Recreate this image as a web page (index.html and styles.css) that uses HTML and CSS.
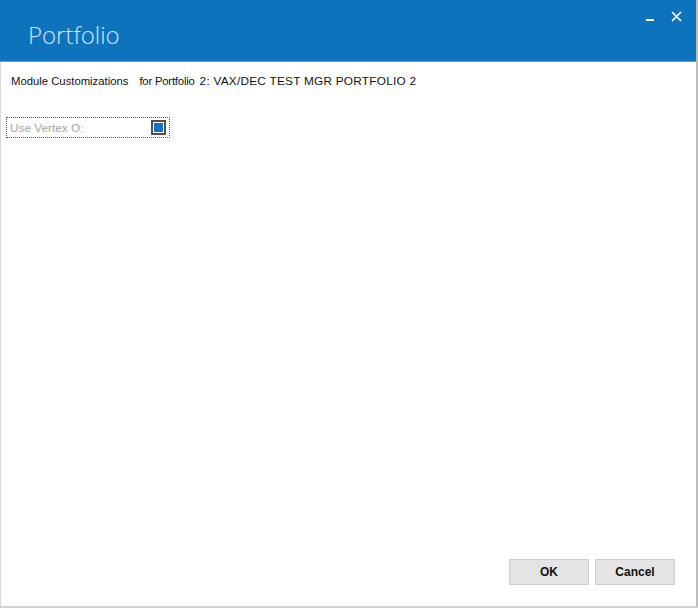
FILE: index.html
```html
<!DOCTYPE html>
<html>
<head>
<meta charset="utf-8">
<link rel="stylesheet" href="styles.css">
</head>
<body>
<div class="window">
  <div class="titlebar">
    <div class="title">Portfolio</div>
    <div class="controls">
      <span class="min"></span>
      <svg class="close" width="11" height="11" viewBox="0 0 11 11"><path d="M1 1 L10 10 M10 1 L1 10" stroke="#ffffff" stroke-width="1.6"/></svg>
    </div>
  </div>
  <div class="content">
    <div class="heading"><span class="lbl">Module Customizations</span><span class="lbl for">for Portfolio</span><span class="name">2: VAX/DEC TEST MGR PORTFOLIO 2</span></div>
    <div class="field">
      <span class="label">Use Vertex O:</span>
      <span class="check"><span class="fill"></span></span>
    </div>
    <div class="spacer"></div>
    <div class="buttons">
      <button class="btn">OK</button>
      <button class="btn">Cancel</button>
    </div>
  </div>
</div>
</body>
</html>
```
FILE: styles.css
```css
html, body {
  margin: 0;
  padding: 0;
  background: #ffffff;
}
.window {
  width: 696px;
  height: 606px;
  border-right: 2px solid #bdbdbd;
  border-bottom: 2px solid #d4d4d4;
  display: flex;
  flex-direction: column;
  font-family: "Liberation Sans", Arial, sans-serif;
}
.titlebar {
  height: 61px;
  background: #0f72bd;
  border-bottom: 1px solid #5d9fd6;
  display: flex;
  justify-content: space-between;
  align-items: flex-start;
  flex-shrink: 0;
}
.title {
  font-family: "Open Sans", sans-serif;
  font-weight: 300;
  font-size: 24px;
  color: #d2e5f6;
  margin-left: 28px;
  margin-top: 19px;
  line-height: 32px;
}
.controls {
  display: flex;
  align-items: flex-start;
  margin-top: 11px;
  margin-right: 14px;
  gap: 17px;
}
.min {
  width: 8px;
  height: 2px;
  background: #ffffff;
  margin-top: 8px;
}
.close {
  display: block;
}
.content {
  flex: 1;
  border-left: 1px solid #d8d8d8;
  display: flex;
  flex-direction: column;
}
.heading {
  display: flex;
  align-items: baseline;
  color: #111111;
  margin-top: 12px;
  margin-left: 10px;
  line-height: 14px;
  white-space: nowrap;
  font-size: 11.3px;
}
.for {
  margin-left: 11px;
  letter-spacing: -0.2px;
}
.name {
  margin-left: 5px;
  font-size: 11.8px;
  letter-spacing: 0.25px;
}
.field {
  margin-top: 29px;
  margin-left: 5px;
  width: 162px;
  height: 19px;
  border: 1px dotted #555555;
  display: flex;
  align-items: center;
  justify-content: space-between;
  box-sizing: content-box;
}
.label {
  font-size: 11.8px;
  color: #a6a6a6;
  margin-left: 3px;
}
.check {
  width: 9px;
  height: 9px;
  border: 2px solid #4f4f4f;
  background: #ffffff;
  padding: 1px;
  margin-right: 3px;
  display: flex;
}
.fill {
  flex: 1;
  background: #0f72c4;
}
.spacer {
  flex: 1;
}
.buttons {
  display: flex;
  justify-content: flex-end;
  gap: 6px;
  margin-right: 21px;
  margin-bottom: 21px;
}
.btn {
  width: 80px;
  height: 26px;
  background: #e4e4e4;
  border: 1px solid #cfcfcf;
  font-family: "Liberation Sans", Arial, sans-serif;
  font-weight: bold;
  font-size: 12px;
  color: #111111;
  padding: 0;
}
```
